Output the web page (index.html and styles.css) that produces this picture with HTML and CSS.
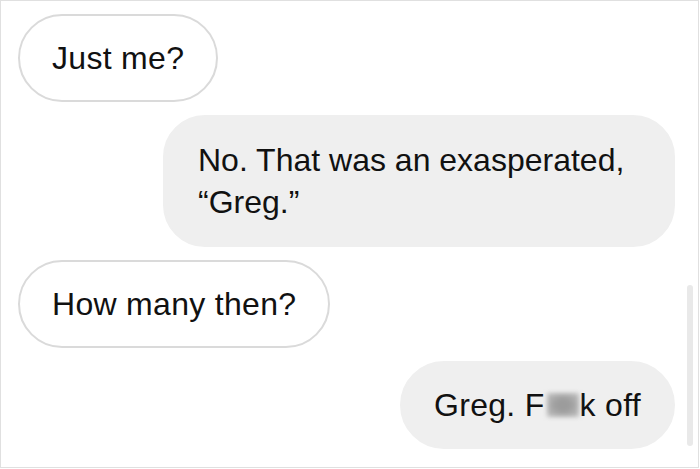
FILE: index.html
```html
<!DOCTYPE html>
<html>
<head>
  <title>Chat</title>
  <link rel="stylesheet" href="styles.css">
</head>
<body>

  <div class="screen">
    <div class="thread">
      <div class="bubble received">Just me?</div>
      <div class="bubble sent wide">No. That was an exasperated, “Greg.”</div>
      <div class="bubble received">How many then?</div>
      <div class="bubble sent">Greg. F<span class="blur" aria-hidden="true"></span>k off</div>
    </div>
    <div class="scrollbar"></div>
  </div>

</body>
</html>
```

FILE: styles.css
```css
body {
  margin: 0;
  background: white;
  font-family: 'Liberation Sans', Arial, sans-serif;
  color: #111;
}

.screen {
  position: relative;
  box-sizing: border-box;
  width: 699px;
  height: 468px;
  border: 1px solid #e0e0e0;
  overflow: hidden;
}

.thread {
  display: flex;
  flex-direction: column;
  align-items: flex-start;
  gap: 13px;
  padding: 13px 23px 0 17px;
}

.bubble {
  box-sizing: border-box;
  border: 2px solid transparent;
  border-radius: 44px;
  padding: 20px 32px 20px 32px;
  font-size: 32px;
  line-height: 44px;
  letter-spacing: 0.3px;
}

.received {
  border-color: #dadada;
  background: white;
}

.sent {
  align-self: flex-end;
  background: #efefef;
  border-color: #efefef;
}

.wide {
  width: 512px;
  border-radius: 42px;
  line-height: 42px;
  letter-spacing: 0;
  padding: 22px 32px 22px 33px;
}

.blur {
  display: inline-block;
  width: 32px;
  height: 24px;
  margin: 0 1px 0 2px;
  vertical-align: -1px;
  background: radial-gradient(ellipse at center, #9c9c9c 30%, #c4c4c4 100%);
  filter: blur(2px);
}

.scrollbar {
  position: absolute;
  top: 284px;
  right: 5px;
  width: 6px;
  height: 161px;
  border-radius: 3px;
  background: #e9e9e9;
}
```
